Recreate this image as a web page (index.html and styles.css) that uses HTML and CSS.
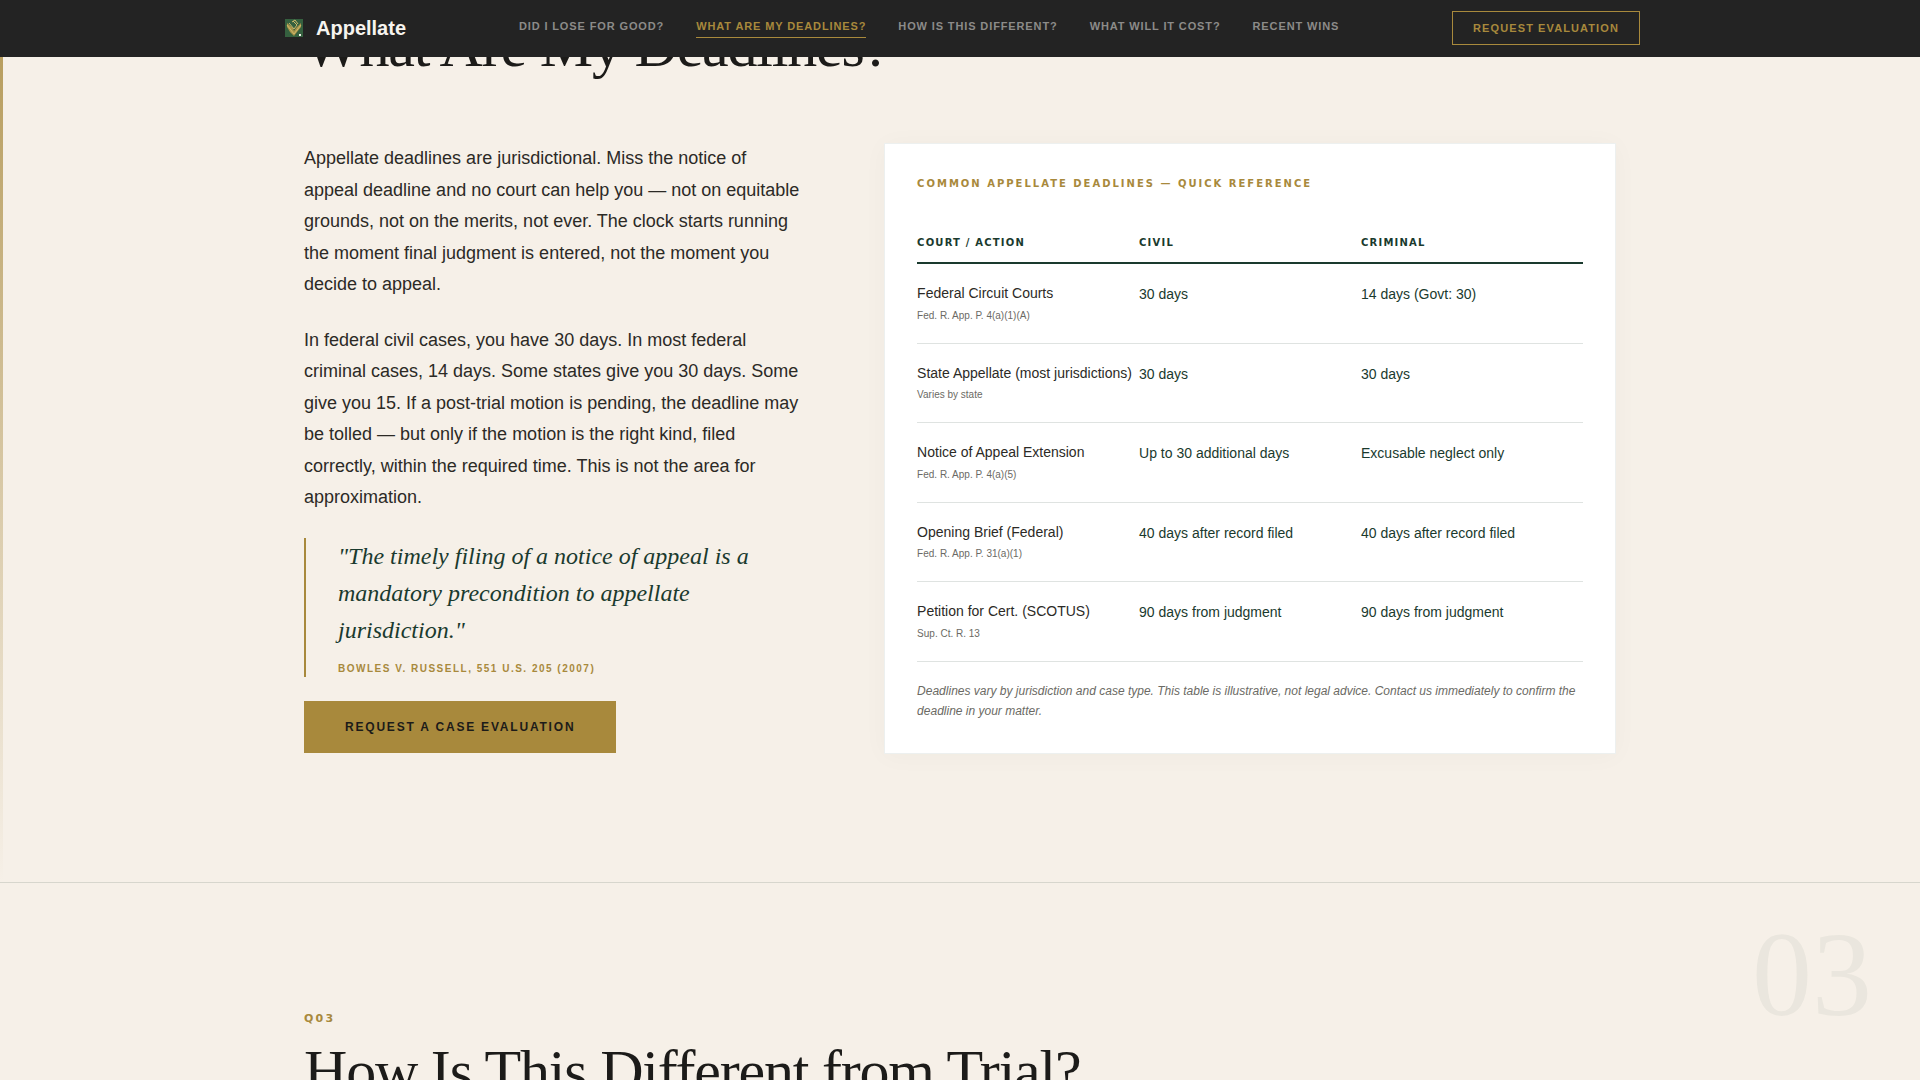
FILE: index.html
```html
<!DOCTYPE html>
<html lang="en">
<head>
  <meta charset="UTF-8" />
  <meta name="viewport" content="width=device-width, initial-scale=1.0"/>
  <title>Appellate</title>
  <link rel="stylesheet" href="styles.css">
</head>
<body>
  <header class="site-header">
    <div class="header-inner">
      <a class="brand" href="#">
        <svg class="brand-mark" viewBox="0 0 28 28" aria-hidden="true">
          <rect x="5" y="5" width="18" height="18" fill="#35603f"/>
          <path d="M7 9l6 5 1 3 2-3 5-5v4l-4 5-3 4-4-4-3-5z" fill="#a8934a"/>
          <path d="M9 9l5 6 3-4-4-4M7 11l7 9 7-9M12 8l3-2 3 4" fill="none" stroke="#cdb96c" stroke-width="1"/>
          <rect x="19" y="20" width="2" height="2" fill="#f3f3ea"/>
        </svg>
        Appellate
      </a>
      <nav class="nav">
        <a href="#lose">Did I Lose for Good?</a>
        <a class="active" href="#deadlines">What Are My Deadlines?</a>
        <a href="#different">How Is This Different?</a>
        <a href="#cost">What Will It Cost?</a>
        <a href="#wins">Recent Wins</a>
      </nav>
      <a class="header-btn" href="#contact">Request Evaluation</a>
    </div>
  </header>

  <main>
    <section class="section section-deadlines" id="deadlines">
      <div class="container">
        <h2>What Are My Deadlines?</h2>
        <div class="columns">
          <div class="copy">
            <p>Appellate deadlines are jurisdictional. Miss the notice of appeal deadline and no court can help you — not on equitable grounds, not on the merits, not ever. The clock starts running the moment final judgment is entered, not the moment you decide to appeal.</p>
            <p>In federal civil cases, you have 30 days. In most federal criminal cases, 14 days. Some states give you 30 days. Some give you 15. If a post-trial motion is pending, the deadline may be tolled — but only if the motion is the right kind, filed correctly, within the required time. This is not the area for approximation.</p>
            <blockquote>
              "The timely filing of a notice of appeal is a mandatory precondition to appellate jurisdiction."
              <cite>Bowles v. Russell, 551 U.S. 205 (2007)</cite>
            </blockquote>
            <a class="btn" href="#contact">Request a Case Evaluation</a>
          </div>

          <div class="card">
            <h3 class="label">Common Appellate Deadlines — Quick Reference</h3>
            <table>
              <thead>
                <tr><th>Court / Action</th><th>Civil</th><th>Criminal</th></tr>
              </thead>
              <tbody>
                <tr>
                  <td>Federal Circuit Courts<small>Fed. R. App. P. 4(a)(1)(A)</small></td>
                  <td class="days">30 days</td>
                  <td class="days">14 days (Govt: 30)</td>
                </tr>
                <tr>
                  <td>State Appellate (most jurisdictions)<small>Varies by state</small></td>
                  <td class="days">30 days</td>
                  <td class="days">30 days</td>
                </tr>
                <tr>
                  <td>Notice of Appeal Extension<small>Fed. R. App. P. 4(a)(5)</small></td>
                  <td class="days">Up to 30 additional days</td>
                  <td class="days">Excusable neglect only</td>
                </tr>
                <tr>
                  <td>Opening Brief (Federal)<small>Fed. R. App. P. 31(a)(1)</small></td>
                  <td class="days">40 days after record filed</td>
                  <td class="days">40 days after record filed</td>
                </tr>
                <tr>
                  <td>Petition for Cert. (SCOTUS)<small>Sup. Ct. R. 13</small></td>
                  <td class="days">90 days from judgment</td>
                  <td class="days">90 days from judgment</td>
                </tr>
              </tbody>
            </table>
            <p class="note">Deadlines vary by jurisdiction and case type. This table is illustrative, not legal advice. Contact us immediately to confirm the deadline in your matter.</p>
          </div>
        </div>
      </div>
    </section>

    <section class="section section-different" id="different">
      <span class="big-number" aria-hidden="true">03</span>
      <div class="container">
        <p class="label">Q03</p>
        <h2>How Is This Different from Trial?</h2>
      </div>
    </section>
  </main>
</body>
</html>
```

FILE: styles.css
```css
:root {
  --cream: #f6f0e8;
  --ink: #1c1b19;
  --green: #1a3a2e;
  --gold: #a8893c;
  --line: rgba(26, 58, 46, 0.14);
  --sans: "Liberation Sans", Arial, sans-serif;
  --serif: "Liberation Serif", "Times New Roman", serif;
  --label: "DejaVu Sans", sans-serif;
}

* { box-sizing: border-box; margin: 0; padding: 0; }
body { font-family: var(--sans); font-size: 18px; line-height: 1.75; color: #2c2a26; background: var(--cream); }
a { text-decoration: none; }

/* Header */
.site-header { position: fixed; top: 0; left: 0; right: 0; z-index: 10; background: #232323; border-bottom: 1px solid #232323; }
.header-inner { display: flex; align-items: center; justify-content: space-between; max-width: 1360px; height: 56px; margin: 0 auto; }
.brand { display: flex; align-items: center; gap: 8px; color: #f6f4ef; font-size: 20px; font-weight: bold; line-height: 28px; }
.brand-mark { width: 28px; height: 28px; }
.nav { display: flex; gap: 32px; }
.nav a { padding-bottom: 3px; border-bottom: 1px solid transparent; color: #8c8b89; font-size: 11px; font-weight: bold; line-height: 16px; letter-spacing: 0.08em; text-transform: uppercase; }
.nav .active { color: var(--gold); border-color: var(--gold); }
.header-btn { padding: 8px 20px; border: 1px solid var(--gold); color: var(--gold); font-size: 11px; font-weight: bold; line-height: 16px; letter-spacing: 0.1em; text-transform: uppercase; }

/* Sections */
.section { position: relative; padding: 128px 48px; }
.container { max-width: 1312px; margin: 0 auto; }
.section-deadlines { padding-top: 13px; }
.section-deadlines::before { content: ""; position: absolute; top: 0; bottom: 0; left: 0; width: 3px; background: linear-gradient(rgba(168, 137, 60, 0.85), rgba(168, 137, 60, 0)); }
.section-different { border-top: 1px solid var(--line); }
h2 { color: var(--ink); font-family: var(--serif); font-size: 60px; font-weight: normal; line-height: 1.1; letter-spacing: -0.02em; }
.label { color: var(--gold); font-family: var(--label); font-size: 10px; font-weight: bold; line-height: 16px; letter-spacing: 0.2em; text-transform: uppercase; }
.section-different .label { margin-bottom: 11px; font-size: 11px; }
.big-number { position: absolute; top: 32px; right: 48px; color: rgba(26, 58, 46, 0.05); font-family: var(--serif); font-size: 120px; line-height: 1; }

/* Deadlines */
.columns { display: grid; grid-template-columns: 41fr 60fr; gap: 80px; margin-top: 64px; }
.copy p { margin-bottom: 24px; }
blockquote { margin-bottom: 24px; padding-left: 32px; border-left: 2px solid var(--gold); color: var(--green); font-family: var(--serif); font-size: 24px; font-style: italic; line-height: 37px; }
cite { display: block; margin-top: 12px; color: var(--gold); font-family: var(--sans); font-size: 10px; font-style: normal; font-weight: bold; line-height: 16px; letter-spacing: 0.15em; text-transform: uppercase; }
.btn { display: inline-block; padding: 16px 41px; background: var(--gold); color: var(--ink); font-size: 12px; font-weight: bold; line-height: 20px; letter-spacing: 0.15em; text-transform: uppercase; vertical-align: top; }

.card { padding: 32px; background: #fff; border: 1px solid rgba(26, 58, 46, 0.08); box-shadow: 0 2px 24px rgba(26, 58, 46, 0.03); }
table { width: 100%; margin-top: 32px; border-spacing: 0; table-layout: fixed; }
th { padding: 12px 0 13px; border-bottom: 2px solid var(--green); color: var(--green); font-family: var(--label); font-size: 10px; line-height: 13px; letter-spacing: 0.12em; text-align: left; text-transform: uppercase; }
td { padding: 17px 0 18px; border-bottom: 1px solid var(--line); font-size: 14px; vertical-align: top; white-space: nowrap; }
td.days { padding-top: 18px; color: var(--green); }
td small { display: block; margin-top: 1px; color: #6b6a64; font-size: 10px; line-height: 18px; }
.note { margin-top: 19px; color: #6b6a64; font-size: 12px; font-style: italic; line-height: 20px; }
```
